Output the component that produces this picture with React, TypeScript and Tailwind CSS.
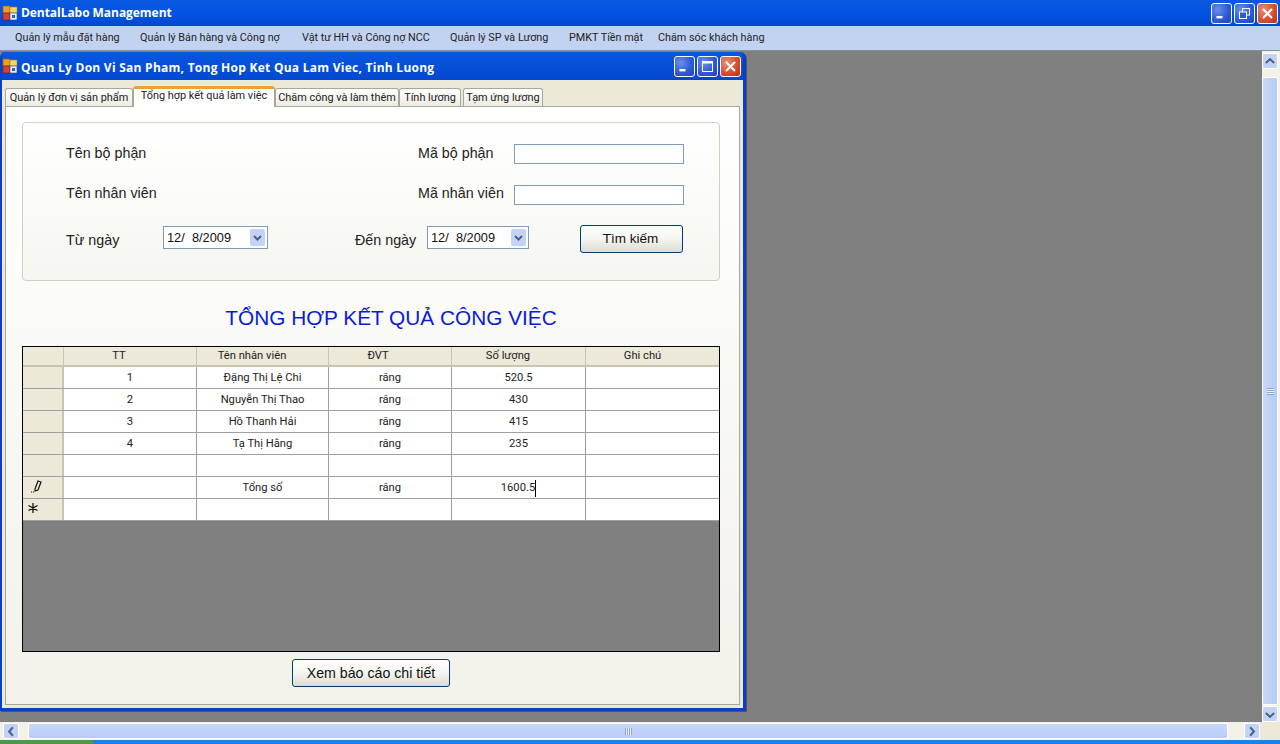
import React from 'react';

const rows = [
  { tt: '1', name: 'Đặng Thị Lệ Chi', unit: 'răng', qty: '520.5' },
  { tt: '2', name: 'Nguyễn Thị Thao', unit: 'răng', qty: '430' },
  { tt: '3', name: 'Hồ Thanh Hải', unit: 'răng', qty: '415' },
  { tt: '4', name: 'Tạ Thị Hằng', unit: 'răng', qty: '235' },
  { tt: '', name: '', unit: '', qty: '' },
  { tt: '', name: 'Tổng số', unit: 'răng', qty: '1600.5', editing: true },
  { tt: '', name: '', unit: '', qty: '', isNew: true },
];

const menus = [
  { label: 'Quản lý mẫu đặt hàng', w: 'w-[125px]' },
  { label: 'Quản lý Bán hàng và Công nợ', w: 'w-[162px]' },
  { label: 'Vật tư HH và Công nợ NCC', w: 'w-[148px]' },
  { label: 'Quản lý SP và Lương', w: 'w-[119px]' },
  { label: 'PMKT Tiền mặt', w: 'w-[89px]' },
  { label: 'Chăm sóc khách hàng', w: 'w-[120px]' },
];

const tabs = [
  { label: 'Quản lý đơn vị sản phẩm', w: 'w-[128px]' },
  { label: 'Tổng hợp kết quả làm việc', w: 'w-[142px]', active: true },
  { label: 'Chăm công và làm thêm', w: 'w-[124px]' },
  { label: 'Tính lương', w: 'w-[62px]' },
  { label: 'Tạm ứng lương', w: 'ml-[2px] w-[80px]' },
];

const AppIcon = () => (
  <svg width="16" height="16" viewBox="0 0 16 16" className="shrink-0">
    <rect x="1" y="1" width="7" height="7" fill="#f0a020" stroke="#8a5a10" strokeWidth="0.6" />
    <rect x="8" y="2" width="7" height="6" fill="#f8d860" stroke="#9a8030" strokeWidth="0.6" />
    <rect x="1" y="8" width="7" height="7" fill="#d84030" stroke="#702018" strokeWidth="0.6" />
    <rect x="8" y="8" width="7" height="7" fill="#e8f0ff" stroke="#304880" strokeWidth="0.6" />
    <rect x="10" y="10" width="3" height="3" fill="#3060c0" />
  </svg>
);

const CaptionButton = ({ kind }: { kind: 'min' | 'restore' | 'max' | 'close' }) => (
  <div
    className={`w-[21px] h-[21px] rounded-[3px] border border-white flex items-center justify-center ${
      kind === 'close'
        ? 'bg-[radial-gradient(circle_at_30%_30%,#e89078,#d8502f_55%,#b83010)]'
        : 'bg-[radial-gradient(circle_at_30%_30%,#6c8fe8,#2f5bd6_55%,#1c43c0)]'
    }`}
  >
    <svg width="15" height="15" viewBox="0 0 15 15" fill="none" stroke="white">
      {kind === 'min' && <rect x="2.5" y="10" width="6" height="2.4" fill="white" strokeWidth="0" />}
      {kind === 'max' && (
        <>
          <rect x="2.5" y="2.5" width="10" height="10" strokeWidth="1" />
          <line x1="2.5" y1="3.5" x2="12.5" y2="3.5" strokeWidth="2" />
        </>
      )}
      {kind === 'restore' && (
        <>
          <rect x="5.5" y="2.5" width="7" height="6.5" strokeWidth="1" />
          <rect x="2.5" y="6" width="7" height="6.5" strokeWidth="1" className="fill-[#2f5bd6]" />
        </>
      )}
      {kind === 'close' && <path d="M3 3 L12 12 M12 3 L3 12" strokeWidth="2" />}
    </svg>
  </div>
);

const ScrollArrow = ({ dir }: { dir: 'up' | 'down' | 'left' | 'right' }) => {
  const d = {
    up: 'M3 9 L7.5 5 L12 9',
    down: 'M3 6 L7.5 10 L12 6',
    left: 'M9.5 3 L5.5 7.5 L9.5 12',
    right: 'M5.5 3 L9.5 7.5 L5.5 12',
  }[dir];
  return (
    <div className="w-[16px] h-[16px] shrink-0 rounded-[2px] border border-white bg-[#c3d3f8] flex items-center justify-center">
      <svg width="15" height="15" viewBox="0 0 15 15" fill="none">
        <path d={d} stroke="#4d6185" strokeWidth="2.2" />
      </svg>
    </div>
  );
};

const DatePicker = ({ w }: { w: string }) => (
  <div className={`${w} h-[23px] border border-[#7f9db9] bg-white flex items-center justify-between pl-[3px] pr-[2px] text-[12.8px] text-[#111]`}>
    <span className="pt-[1px]">12/&nbsp; 8/2009</span>
    <div className="w-[15px] h-[17px] rounded-[2px] bg-[#c3d3f8] flex items-center justify-center">
      <svg width="11" height="11" viewBox="0 0 11 11" fill="none">
        <path d="M2 4 L5.5 7.5 L9 4" stroke="#4d6185" strokeWidth="2" />
      </svg>
    </div>
  </div>
);

const XpButton = ({ className, children }: { className: string; children: React.ReactNode }) => (
  <div className={`rounded-[3px] border border-[#003c74] bg-gradient-to-b from-white via-[#f5f5f0] to-[#dcdcd2] flex items-center justify-center text-[#111] ${className}`}>
    {children}
  </div>
);

const App = () => {
  return (
    <div className="w-[1280px] h-[744px] overflow-hidden flex flex-col font-['Roboto',Arial,sans-serif] bg-[#808080]">
      {/* main title bar */}
      <div className="h-[26px] shrink-0 flex items-center justify-between pl-[2px] pr-[2px] bg-gradient-to-b from-[#0a58e0] via-[#0254e4] to-[#0347cf]">
        <div className="flex items-center gap-[3px]">
          <AppIcon />
          <span className="text-white font-bold text-[12px] tracking-[-0.05px] font-['Open_Sans',sans-serif]">DentalLabo Management</span>
        </div>
        <div className="flex gap-[2px]">
          <CaptionButton kind="min" />
          <CaptionButton kind="restore" />
          <CaptionButton kind="close" />
        </div>
      </div>

      {/* menu */}
      <div className="h-[25px] shrink-0 flex items-center pl-[5px] bg-[#c2d3f1] border-b border-[#8a8f9a] text-[10.8px] text-[#222]">
        {menus.map((m) => (
          <div key={m.label} className={`${m.w} shrink-0 pl-[10px] whitespace-nowrap`}>{m.label}</div>
        ))}
      </div>

      {/* mdi area */}
      <div className="flex-1 min-h-0 flex flex-col">
        <div className="flex-1 min-h-0 flex">
          <div className="flex-1 relative">
            {/* child window */}
            <div className="absolute left-0 top-[1px] w-[746px] h-[659px] flex flex-col rounded-t-[6px] bg-[#0a3dc8] pl-[2px] pr-[3px] pb-[3px] shadow-[1px_1px_0_#555]">
              <div className="h-[28px] shrink-0 flex items-center justify-between pr-[2px] bg-gradient-to-b from-[#0a58e0] to-[#0347cf]">
                <div className="flex items-center gap-[3px]">
                  <AppIcon />
                  <span className="pt-[3px] text-white font-bold text-[12px] font-['Open_Sans',sans-serif] tracking-[0.26px]">Quan Ly Don Vi San Pham, Tong Hop Ket Qua Lam Viec, Tinh Luong</span>
                </div>
                <div className="flex gap-[2px]">
                  <CaptionButton kind="min" />
                  <CaptionButton kind="max" />
                  <CaptionButton kind="close" />
                </div>
              </div>

              <div className="flex-1 min-h-0 flex flex-col bg-[#ece9d8] pl-[3px] pr-[3px] pb-[3px] pt-[6px]">
                {/* tabs */}
                <div className="h-[20px] shrink-0 flex items-end text-[10.9px] text-[#222]">
                  {tabs.map((t) =>
                    t.active ? (
                      <div key={t.label} className="w-[142px] h-[21px] -mb-px z-10 shrink-0 rounded-t-[3px] border-x border-[#a8a899] border-t-[3px] border-t-[#f0a030] bg-white flex items-center justify-center pb-[3px] whitespace-nowrap">
                        {t.label}
                      </div>
                    ) : (
                      <div key={t.label} className={`${t.w} h-[18px] shrink-0 rounded-t-[3px] border border-b-0 border-[#a8a899] bg-gradient-to-b from-white to-[#ecebe3] flex items-center justify-center pt-[1px] whitespace-nowrap`}>
                        {t.label}
                      </div>
                    ),
                  )}
                </div>

                {/* tab page */}
                <div className="flex-1 min-h-0 flex flex-col border border-[#a8a899] bg-gradient-to-b from-white to-[#f2f1ea] pl-[16px] pr-[19px] pt-[15px]">
                  {/* search box */}
                  <div className="h-[159px] shrink-0 rounded-[4px] border border-[#d0d0bf] bg-gradient-to-b from-white to-[#f6f6f0] pl-[43px] pt-[12px] text-[14.3px] text-[#222] font-['Liberation_Sans',sans-serif]">
                    <div className="h-[39px] flex items-center">
                      <span className="w-[352px] -mt-[2px]">Tên bộ phận</span>
                      <span className="w-[96px] -mt-[2px] whitespace-nowrap">Mã bộ phận</span>
                      <div className="w-[170px] h-[20px] -mt-[2px] border border-[#7f9db9] bg-white" />
                    </div>
                    <div className="h-[40px] flex items-center">
                      <span className="w-[352px]">Tên nhân viên</span>
                      <span className="w-[96px] whitespace-nowrap">Mã nhân viên</span>
                      <div className="w-[170px] h-[20px] mt-[2px] border border-[#7f9db9] bg-white" />
                    </div>
                    <div className="h-[46px] flex items-center">
                      <span className="w-[97px] pt-[8px] whitespace-nowrap">Từ ngày</span>
                      <DatePicker w="w-[105px]" />
                      <span className="w-[159px] pl-[87px] pt-[8px] whitespace-nowrap">Đến ngày</span>
                      <DatePicker w="w-[102px]" />
                      <XpButton className="w-[103px] h-[28px] ml-[51px] mt-[4px] pr-[2px] text-[13.5px]">Tìm kiếm</XpButton>
                    </div>
                  </div>

                  <div className="h-[65px] shrink-0 flex items-center justify-center pl-[40px] pt-[8px] text-[20.8px] text-[#0a1ad8] font-['Liberation_Sans',sans-serif]">
                    TỔNG HỢP KẾT QUẢ CÔNG VIỆC
                  </div>

                  {/* data grid */}
                  <div className="h-[306px] shrink-0 flex flex-col border border-black bg-[#808080] text-[11.2px] text-[#222]">
                    <div className="h-[20px] shrink-0 grid grid-cols-[41px_133px_132px_123px_134px_134px] bg-[#ece9d8] border-b-2 border-[#c8c5b2]">
                      <div className="border-r border-[#c8c5b2]" />
                      <div className="pt-[1px] pr-[22px] text-center border-r border-[#c8c5b2]">TT</div>
                      <div className="pt-[1px] pr-[21px] text-center border-r border-[#c8c5b2]">Tên nhân viên</div>
                      <div className="pt-[1px] pr-[24px] text-center border-r border-[#c8c5b2]">ĐVT</div>
                      <div className="pt-[1px] pr-[21px] text-center border-r border-[#c8c5b2]">Số lượng</div>
                      <div className="pt-[1px] pr-[21px] text-center">Ghi chú</div>
                    </div>
                    {rows.map((r, i) => (
                      <div key={i} className="h-[22px] shrink-0 grid grid-cols-[41px_133px_132px_123px_134px_134px] items-stretch bg-white border-b border-[#a0a0a0]">
                        <div className="bg-[#ece9d8] border-r-2 border-r-[#c8c5b2] flex items-center justify-center">
                          {r.editing && (
                            <svg width="14" height="16" viewBox="0 0 14 16" fill="none" className="-ml-[14px] -mt-[3px]">
                              <path d="M6 11 L9 3 L12 4 L9 12 L6 13 Z" stroke="#111" strokeWidth="1.2" />
                              <path d="M2 14 h1 M4 14 h1" stroke="#111" strokeWidth="1" />
                            </svg>
                          )}
                          {r.isNew && (
                            <svg width="12" height="12" viewBox="0 0 12 12" stroke="#111" strokeWidth="1.3" className="-ml-[20px] -mt-[3px]">
                              <path d="M6 1 V11 M1.5 3.5 L10.5 8.5 M10.5 3.5 L1.5 8.5" />
                            </svg>
                          )}
                        </div>
                        <div className="flex items-center justify-center pt-[2px] border-r border-[#a0a0a0]">{r.tt}</div>
                        <div className="flex items-center justify-center pt-[2px] border-r border-[#a0a0a0]">{r.name}</div>
                        <div className="flex items-center justify-center pt-[2px] border-r border-[#a0a0a0]">{r.unit}</div>
                        <div className="flex items-center justify-center pt-[2px] border-r border-[#a0a0a0]">
                          <span className={r.editing ? 'border-r border-black' : ''}>{r.qty}</span>
                        </div>
                        <div />
                      </div>
                    ))}
                  </div>

                  <div className="flex justify-center pt-[7px]">
                    <XpButton className="w-[158px] h-[28px] pt-[2px] text-[14.2px] font-['Liberation_Sans',sans-serif]">Xem báo cáo chi tiết</XpButton>
                  </div>
                </div>
              </div>
            </div>
          </div>

          {/* vertical scrollbar */}
          <div className="w-[18px] shrink-0 flex flex-col items-center bg-[#f3f1e8] pt-[2px] pr-[2px]">
            <ScrollArrow dir="up" />
            <div className="flex-1 w-[16px] mt-[8px] mb-[1px] rounded-[2px] border border-white bg-gradient-to-r from-[#c8d8fb] to-[#b8cbf6] flex items-center justify-center">
              <div className="w-[7px] h-[7px] bg-[repeating-linear-gradient(180deg,#8aa4dc_0,#8aa4dc_1px,#eef3ff_1px,#eef3ff_2px)]" />
            </div>
            <ScrollArrow dir="down" />
          </div>
        </div>

        {/* horizontal scrollbar */}
        <div className="h-[18px] shrink-0 flex items-center bg-[#f3f1e8] pl-[3px]">
          <ScrollArrow dir="left" />
          <div className="w-[1200px] h-[16px] ml-[9px] rounded-[2px] border border-white bg-gradient-to-b from-[#c8d8fb] to-[#b8cbf6] flex items-center justify-center">
            <div className="w-[7px] h-[7px] bg-[repeating-linear-gradient(90deg,#8aa4dc_0,#8aa4dc_1px,#eef3ff_1px,#eef3ff_2px)]" />
          </div>
          <div className="w-[16px] ml-[16px]"><ScrollArrow dir="right" /></div>
          <div className="flex-1 h-full bg-[#ece9d8]" />
        </div>

        {/* taskbar sliver */}
        <div className="h-[4px] shrink-0 flex">
          <div className="w-[93px] bg-[#4a9a4a]" />
          <div className="flex-1 bg-[#1f7fe8]" />
        </div>
      </div>
    </div>
  );
};

export default App;
